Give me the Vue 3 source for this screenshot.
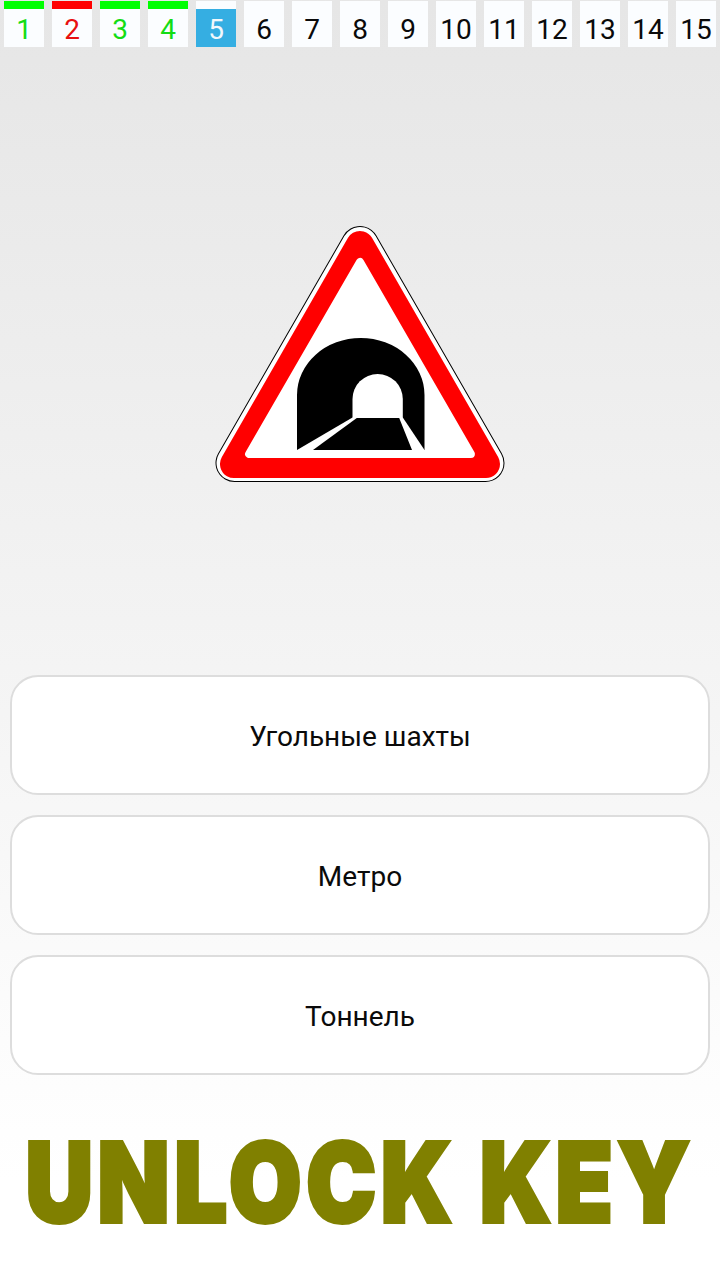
<script setup>
const states = { 1: 'ok', 2: 'bad', 3: 'ok', 4: 'ok', 5: 'current' }
const cells = Array.from({ length: 15 }, (_, i) => ({ num: i + 1, state: states[i + 1] || '' }))
const answers = ['Угольные шахты', 'Метро', 'Тоннель']
</script>

<template>
    <div class="screen">
        <div class="progress">
            <div v-for="cell in cells" :key="cell.num" class="cell" :class="cell.state">
                <div class="cell_bar"></div>
                <div class="cell_num">{{ cell.num }}</div>
            </div>
        </div>

        <div class="sign_area">
            <svg class="sign" width="296" height="264" viewBox="212 222 296 264">
                <polygon points="360,245 234.500,463 485.500,463" fill="#000" stroke="#000" stroke-width="38" stroke-linejoin="round" />
                <polygon points="360,245 234.500,463 485.500,463" fill="#fff" stroke="#fff" stroke-width="36" stroke-linejoin="round" />
                <polygon points="360,245 234,464 486,464" fill="#f00" stroke="#f00" stroke-width="28" stroke-linejoin="round" />
                <polygon points="360,262 249.100,454 470.900,454" fill="#fff" stroke="#fff" stroke-width="8" stroke-linejoin="round" />
                <path d="M297 450 V395 A63.750 57 0 0 1 424.500 395 V450 Z" fill="#000" />
                <path d="M352.500 418 V399 A25.150 25 0 0 1 402.800 399 V418 Z" fill="#fff" />
                <polygon points="352.500,417.500 357.500,417.500 313,450 297,450" fill="#fff" />
                <polygon points="399,417.500 402.800,417.500 424.500,450 412,450" fill="#fff" />
            </svg>
        </div>

        <div class="answers">
            <div v-for="answer in answers" :key="answer" class="answer">{{ answer }}</div>
        </div>

        <div class="unlock">UNLOCK KEY</div>
    </div>
</template>

<style scoped>
    .screen{
        display: flex;
        flex-direction: column;
        width: 720px;
        height: 1280px;
        overflow: hidden;
        background: linear-gradient(#e6e6e6 0, #e7e7e7 60px, #ffffff 1180px);
        font-family: Roboto, sans-serif;
    }
    .progress{
        display: flex;
        gap: 8px;
        padding: 1px 4px 0;
    }
    .cell{
        width: 40px;
        height: 46px;
        background: #fbfdff;
    }
    .cell_bar{
        height: 8px;
    }
    .cell_num{
        height: 38px;
        line-height: 41px;
        text-align: center;
        font-size: 28px;
        color: #0a0a0a;
    }
    .ok .cell_bar{
        background: #00ff00;
    }
    .ok .cell_num{
        color: #14dc14;
    }
    .bad .cell_bar{
        background: #ff0000;
    }
    .bad .cell_num{
        color: #e81010;
    }
    .current .cell_num{
        background: #35aee2;
        color: #f2f8fc;
    }
    .sign_area{
        display: flex;
        justify-content: center;
        height: 628px;
        padding-top: 175px;
        box-sizing: border-box;
    }
    .sign{
        display: block;
    }
    .answers{
        display: flex;
        flex-direction: column;
        gap: 20px;
        padding: 0 10px;
    }
    .answer{
        display: flex;
        align-items: center;
        justify-content: center;
        height: 120px;
        box-sizing: border-box;
        padding-top: 2px;
        background: #fff;
        border: 2px solid #dddddd;
        border-radius: 28px;
        font-size: 28px;
        color: #0a0a0a;
    }
    .unlock{
        align-self: center;
        width: 662px;
        margin-top: 57px;
        display: flex;
        justify-content: center;
        white-space: nowrap;
        font-family: Inter, sans-serif;
        font-weight: 900;
        font-size: 110px;
        line-height: 100px;
        letter-spacing: 5.500px;
        color: #808000;
        -webkit-text-stroke: 4px #808000;
        transform: scaleX(0.85);
    }
</style>
